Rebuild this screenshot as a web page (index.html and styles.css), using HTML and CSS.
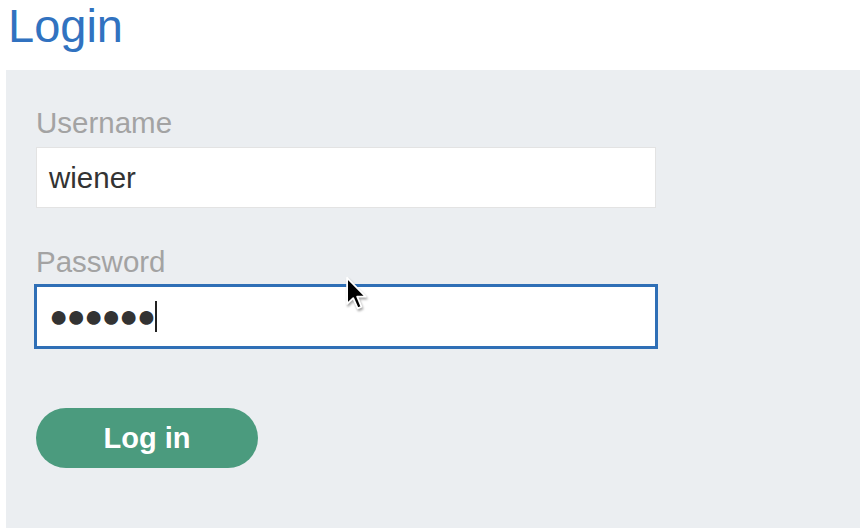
FILE: index.html
```html
<!DOCTYPE html>
<html lang="en">
<head>
<meta charset="utf-8">
<title>Login</title>
<link rel="stylesheet" href="styles.css">
</head>
<body>
<h1 class="title">Login</h1>
<section class="panel">
  <form class="login-form">
    <label class="label">Username</label>
    <div class="field">wiener</div>
    <label class="label label-second">Password</label>
    <div class="field field-focus"><span class="dots">●●●●●●</span><span class="caret"></span></div>
    <button type="button" class="btn">Log in</button>
  </form>
</section>
<svg class="pointer" width="24" height="36" viewBox="0 0 13 20" aria-hidden="true">
  <path d="M1 1 L1 15.5 L4.4 12.3 L6.9 18 L9 17.1 L6.6 11.5 L11.3 11.5 Z" fill="#000" stroke="#fff" stroke-width="1" stroke-linejoin="round"/>
</svg>
</body>
</html>
```
FILE: styles.css
```css
html, body {
  margin: 0;
  padding: 0;
  background: #ffffff;
  font-family: "Liberation Sans", Arial, sans-serif;
}
body {
  width: 860px;
  height: 530px;
  overflow: hidden;
  position: relative;
}
.title {
  margin: 0;
  height: 70px;
  padding-left: 8px;
  font-size: 47px;
  line-height: 52px;
  font-weight: normal;
  color: #3172c0;
}
.panel {
  margin-left: 6px;
  background: #ebeef1;
  padding: 36px 0 60px 30px;
}
.login-form {
  display: flex;
  flex-direction: column;
  align-items: flex-start;
}
.label {
  font-size: 29.5px;
  line-height: 34px;
  color: #a3a3a3;
  margin-bottom: 7px;
}
.label-second {
  margin-top: 37px;
}
.field {
  box-sizing: border-box;
  width: 620px;
  height: 61px;
  background: #ffffff;
  border: 1px solid #e3e3e3;
  padding-left: 12px;
  display: flex;
  align-items: center;
  font-size: 29.5px;
  color: #333333;
}
.field-focus {
  border-color: #2f6fb6;
  outline: 2px solid #2f6fb6;
  padding-left: 12px;
}
.dots {
  font-size: 32px;
  letter-spacing: -1.8px;
  color: #333333;
}
.caret {
  display: inline-block;
  width: 2px;
  height: 31px;
  background: #222222;
  margin-left: 1px;
}
.btn {
  margin-top: 61px;
  width: 222px;
  height: 60px;
  border: none;
  border-radius: 30px;
  background: #4b9b7e;
  color: #ffffff;
  font-family: "Liberation Sans", Arial, sans-serif;
  font-weight: bold;
  font-size: 29px;
  padding: 0;
}
.pointer {
  position: absolute;
  left: 345px;
  top: 276px;
  filter: drop-shadow(1px 2px 1px rgba(0,0,0,0.35));
}
```
